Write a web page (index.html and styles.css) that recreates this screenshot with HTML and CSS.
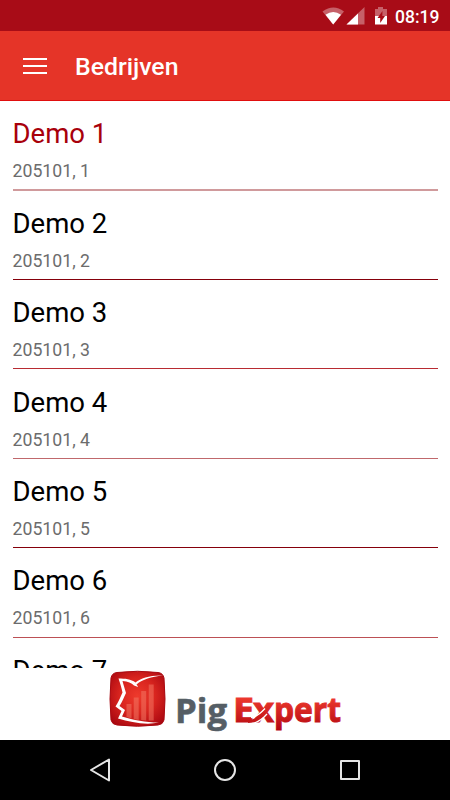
FILE: index.html
```html
<!DOCTYPE html>
<html lang="nl">
<head>
<meta charset="utf-8">
<title>Bedrijven</title>
<link rel="stylesheet" href="styles.css">
</head>
<body>
<div class="status">
  <svg class="status-icons" width="66" height="20" viewBox="0 0 66 20">
    <path d="M0.500 4.500Q11.500 -3.500 22 4.500L11.200 17.500Z" fill="#fff" fill-opacity=".35"/>
    <path d="M3.500 7.700Q11.200 2.500 19 7.700L11.200 17.500Z" fill="#fff"/>
    <path d="M42.500 0V17.500H24.500Z" fill="#fff" fill-opacity=".35"/>
    <path d="M36 6.500V17.500H24.500Z" fill="#fff"/>
    <path d="M53 2h3V0h5v2h4v7H53Z" fill="#fff" fill-opacity=".35"/>
    <path d="M53 9h12v8.500H53Z" fill="#fff"/>
    <path d="M60.500 4L55.500 11h2.700v5L63 9h-2.700Z" fill="#a80c17"/>
  </svg>
  <span class="clock">08:19</span>
</div>
<header class="bar">
  <div class="menu"><i></i><i></i><i></i></div>
  <h1 class="title">Bedrijven</h1>
</header>
<main class="list">
  <div class="row active"><div class="name">Demo 1</div><div class="code">205101, 1</div></div>
  <div class="row dark"><div class="name">Demo 2</div><div class="code">205101, 2</div></div>
  <div class="row bright"><div class="name">Demo 3</div><div class="code">205101, 3</div></div>
  <div class="row soft"><div class="name">Demo 4</div><div class="code">205101, 4</div></div>
  <div class="row dark"><div class="name">Demo 5</div><div class="code">205101, 5</div></div>
  <div class="row"><div class="name">Demo 6</div><div class="code">205101, 6</div></div>
  <div class="row"><div class="name">Demo 7</div></div>
</main>
<footer class="brand">
  <svg width="450" height="72" viewBox="0 668 450 72">
    <defs>
      <radialGradient id="badge" cx=".5" cy=".45" r=".65">
        <stop offset="0" stop-color="#ee3a2c"/><stop offset=".5" stop-color="#d9251f"/><stop offset="1" stop-color="#a90710"/>
      </radialGradient>
      <linearGradient id="word" gradientUnits="userSpaceOnUse" x1="0" y1="697" x2="0" y2="731">
        <stop offset="0" stop-color="#ee3a2e"/><stop offset="1" stop-color="#b2060e"/>
      </linearGradient>
    </defs>
    <path d="M117 672.500Q137.500 670 158 672.500Q163 673 164 678Q166 699 164 720Q163 724.500 158 725Q137.500 727.500 117 725Q112 724.500 111 720Q109 699 111 678Q112 673 117 672.500Z" fill="url(#badge)" stroke="#a90b12" stroke-width="1"/>
    <g fill="#f47b68" fill-opacity=".5">
      <path d="M126.500 704h5v14.500l-5-1.500Z"/><path d="M133.700 697.500h5v22.500l-5-1Z"/><path d="M141.200 691h5v29.500l-5-.5Z"/><path d="M148.700 684.500h5v36h-5Z"/>
    </g>
    <path d="M163 675.500C150 675 141 678 135.500 682.500C131 679 125 678.500 118.500 678.500C120.500 684 121.500 688 122.500 692.500C120 698 118 703 115.500 706.500L121.500 711L118 718.500C131 722 145 725.500 159 722.500C145 722.500 134 720 122 716.500L125 710L119.500 706C122 702 124 697.500 126 693C124.500 688 123.500 684.500 122.500 681C128 681.500 131.500 683 134 685.500L138 687C137.500 685.500 137 685 136.500 684.500C143 679 151 677 163 675.500Z" fill="#fff"/>
    <text class="pig" x="175" y="722.700" textLength="52" lengthAdjust="spacingAndGlyphs">Pig</text>
    <g fill="url(#word)" stroke="url(#word)">
      <text class="expert" x="233" y="722" textLength="21" lengthAdjust="spacingAndGlyphs">E</text>
      <text class="expert" x="253" y="722" textLength="21" lengthAdjust="spacingAndGlyphs">x</text>
      <text class="expert" x="274" y="722" textLength="67" lengthAdjust="spacingAndGlyphs">pert</text>
    </g>
    <path d="M251 717.500C257 716.500 261 713 265 708.500" fill="none" stroke="#fff" stroke-width="1.300"/>
    <path d="M248 721.500C256 721 261 717 266 711.500" fill="none" stroke="url(#word)" stroke-width="3"/>
    <path d="M250 724C258 723 263 718.500 267 714" fill="none" stroke="#fff" stroke-width="1.300"/>
  </svg>
</footer>
<nav class="nav">
  <svg width="450" height="60" viewBox="0 0 450 60" fill="none" stroke="#e6e6e6" stroke-width="2" stroke-linejoin="round">
    <path d="M91 30L109 19.500V40.500Z"/>
    <circle cx="225" cy="30" r="10"/>
    <rect x="341" y="21" width="18" height="18"/>
  </svg>
</nav>
</body>
</html>
```
FILE: styles.css
```css
* { box-sizing: border-box; }
body { margin: 0; width: 450px; height: 800px; overflow: hidden; background: #fff; font-family: Roboto, sans-serif; display: flex; flex-direction: column; }
.status { height: 31px; flex: none; background: #a80c17; display: flex; justify-content: flex-end; align-items: flex-start; padding: 7px 11px 0 0; gap: 7px; color: #fff; }
.status-icons { display: block; }
.clock { font-size: 17.500px; font-weight: 500; line-height: 20px; width: 44px; white-space: nowrap; }
.bar { height: 70px; flex: none; background: #e53428; border-bottom: 1px solid #e00e0e; display: flex; align-items: center; padding: 2px 0 0 23px; }
.menu { width: 24px; display: flex; flex-direction: column; gap: 5px; margin: 0 28px 2px 0; }
.menu i { height: 2px; background: #fff; }
.title { margin: 1px 0 0; font-size: 24.800px; font-weight: 500; color: #fff; line-height: 30px; }
.list { height: 567px; flex: none; overflow: hidden; padding: 0 12.500px; }
.row { height: 89.400px; padding-top: 16.200px; border-bottom: 1px solid #bc5055; color: #000; }
.dark { border-bottom-color: #85000b; }
.bright { border-bottom-color: #b82b32; }
.soft { border-bottom-color: #c0686c; }
.name { font-size: 27.500px; line-height: 34px; }
.code { font-size: 17.700px; line-height: 22px; margin-top: 9px; color: #6c6c6c; }
.active { border-bottom: 2px solid #d09a9c; height: 89.600px; }
.active .name { color: #a8000b; }
.brand { height: 72px; flex: none; }
.brand svg, .nav svg { display: block; }
.pig, .expert { font-family: "Open Sans", sans-serif; font-weight: 700; font-size: 34px; }
.pig { fill: #555e65; stroke: #555e65; stroke-width: .6px; }
.expert { stroke-width: 1px; }
.nav { height: 60px; flex: none; background: #000; }
```
